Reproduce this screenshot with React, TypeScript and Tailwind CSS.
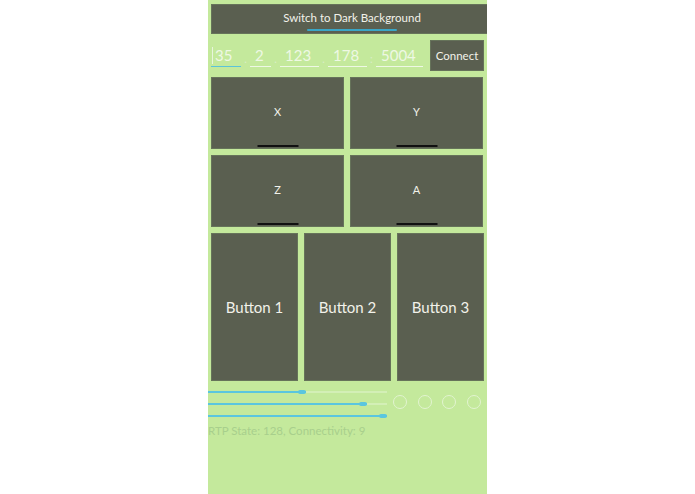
import React from "react";

const tiles = ["X", "Y", "Z", "A"];
const buttons = ["Button 1", "Button 2", "Button 3"];
const fields = [
  { value: "35", w: "w-[30px]", sep: ".", focused: true },
  { value: "2", w: "w-[21px]", sep: "." },
  { value: "123", w: "w-[39px]", sep: "." },
  { value: "178", w: "w-[39px]", sep: ":" },
  { value: "5004", w: "w-[47px]" },
];
const sliders = [98, 159, 179];

export default function App() {
  return (
    <div className="min-h-screen w-full bg-white font-['Lato','Liberation_Sans',sans-serif]">
      <div className="mx-auto w-[279px] min-h-[494px] bg-[#c4e99c] overflow-hidden">
        {/* top toggle */}
        <div className="ml-[3px] mt-[4px] w-[282px] h-[30px] bg-[#5a5f50] border border-[#66735a] relative flex items-center justify-center">
          <span className="text-[11.5px] text-[#f2f2ea] -mt-[2px]">Switch to Dark Background</span>
          <div className="absolute left-[95px] bottom-[2px] w-[90px] h-[2px] rounded-full bg-[#3aa6c6]" />
        </div>

        {/* address row */}
        <div className="mt-[6px] ml-[3px] flex items-center h-[31px]">
          {fields.map((f) => (
            <React.Fragment key={f.value}>
              <div className={`${f.w} h-[31px] relative flex items-center`}>
                {f.focused && <div className="absolute left-[1px] top-[7px] w-px h-[17px] bg-[#e8f5dc]" />}
                <span className={`text-[15px] text-[#eef8e4] ${f.focused ? "pl-[4px]" : "pl-[5px]"}`}>{f.value}</span>
                <div className={`absolute left-0 right-0 bottom-[4px] h-px ${f.focused ? "bg-[#5cc3d8]" : "bg-[#eef8e4]"}`} />
              </div>
              {f.sep && (
                <span className="w-[9px] text-center text-[11px] text-[#d9eec6] mt-[8px]">{f.sep}</span>
              )}
            </React.Fragment>
          ))}
          <button className="ml-[7px] w-[54px] h-[31px] bg-[#5a5f50] border border-[#66735a] text-[11.5px] text-[#f2f2ea]">
            Connect
          </button>
        </div>

        {/* xyza pads */}
        <div className="mt-[6px] ml-[3px] w-[272px] grid grid-cols-2 gap-x-[6px] gap-y-[6px]">
          {tiles.map((t) => (
            <div
              key={t}
              className="h-[72px] bg-[#5a5f50] border border-[#66735a] relative flex items-center justify-center"
            >
              <span className="text-[11px] text-[#f2f2ea] -mt-[1px]">{t}</span>
              <div className="absolute bottom-[1px] left-1/2 -translate-x-1/2 w-[41px] h-[2px] bg-[#111]" />
            </div>
          ))}
        </div>

        {/* big buttons */}
        <div className="mt-[6px] ml-[3px] w-[273px] grid grid-cols-3 gap-[6px]">
          {buttons.map((b) => (
            <div
              key={b}
              className="h-[148px] bg-[#5a5f50] border border-[#66735a] flex items-center justify-center"
            >
              <span className="text-[15px] text-[#f2f2ea]">{b}</span>
            </div>
          ))}
        </div>

        {/* sliders + indicators */}
        <div className="mt-[8px] flex items-start">
          <div className="w-[179px] flex flex-col gap-[10px] pt-[2px]">
            {sliders.map((v) => (
              <div key={v} className="relative h-[2px] bg-[#d3efb6]">
                <div className="absolute left-0 top-0 h-[2px] bg-[#5ac6df]" style={{ width: v }} />
                <div
                  className="absolute top-[-1px] h-[4px] w-[8px] rounded-full bg-[#5ac6df]"
                  style={{ left: v - 8 }}
                />
              </div>
            ))}
          </div>
          <div className="ml-[6px] mt-[6px] flex gap-[10.5px]">
            {[0, 1, 2, 3].map((i) => (
              <div key={i} className="w-[14px] h-[14px] rounded-full border border-[#e2f4d0]" />
            ))}
          </div>
        </div>

        <div className="mt-[5px] text-[11.5px] text-[#a8cf8c]">RTP State: 128, Connectivity: 9</div>
      </div>
    </div>
  );
}
